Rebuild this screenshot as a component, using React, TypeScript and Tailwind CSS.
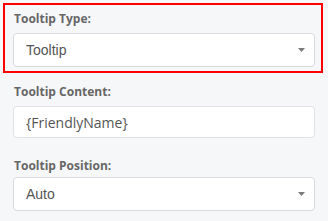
const Caret = () => (
  <svg width="7" height="4" viewBox="0 0 7 4" className="absolute right-[9px] top-1/2 -translate-y-1/2">
    <polygon points="0,0 7,0 3.5,4" fill="#7a7a7a" />
  </svg>
);

const Label = ({ children }: { children: string }) => (
  <div className="ml-px text-[12px] leading-[18px] font-bold text-[#666666] [font-family:'Open_Sans',sans-serif]">
    {children}
  </div>
);

const SelectBox = ({ value }: { value: string }) => (
  <div className="relative flex h-[34px] w-[302px] items-center rounded-[4px] border border-[#d6d8db] bg-white pl-[12px] text-[14px] text-[#555555] [font-family:'Liberation_Sans',Arial,sans-serif]">
    {value}
    <Caret />
  </div>
);

export default function App() {
  return (
    <div className="h-[221px] w-[328px] overflow-hidden bg-[#f6f7f9] pt-[3px]">
      {/* Tooltip Type (highlighted) */}
      <div className="ml-[3px] w-[320px] border-2 border-[#ff0000] pb-[4px] pl-[8px] pt-[5px]">
        <Label>Tooltip Type:</Label>
        <div className="mt-[5px]">
          <SelectBox value="Tooltip" />
        </div>
      </div>

      {/* Tooltip Content */}
      <div className="ml-[13px] mt-[10px] w-[302px]">
        <Label>Tooltip Content:</Label>
        <div className="mt-[5px] flex h-[32px] items-center rounded-[4px] border border-[#e0e2e5] bg-white pl-[12px] text-[14px] text-[#555555] [font-family:'Open_Sans',sans-serif]">
          {"{FriendlyName}"}
        </div>
      </div>

      {/* Tooltip Position */}
      <div className="ml-[13px] mt-[19px] w-[302px]">
        <Label>Tooltip Position:</Label>
        <div className="mt-[2px]">
          <SelectBox value="Auto" />
        </div>
      </div>
    </div>
  );
}
